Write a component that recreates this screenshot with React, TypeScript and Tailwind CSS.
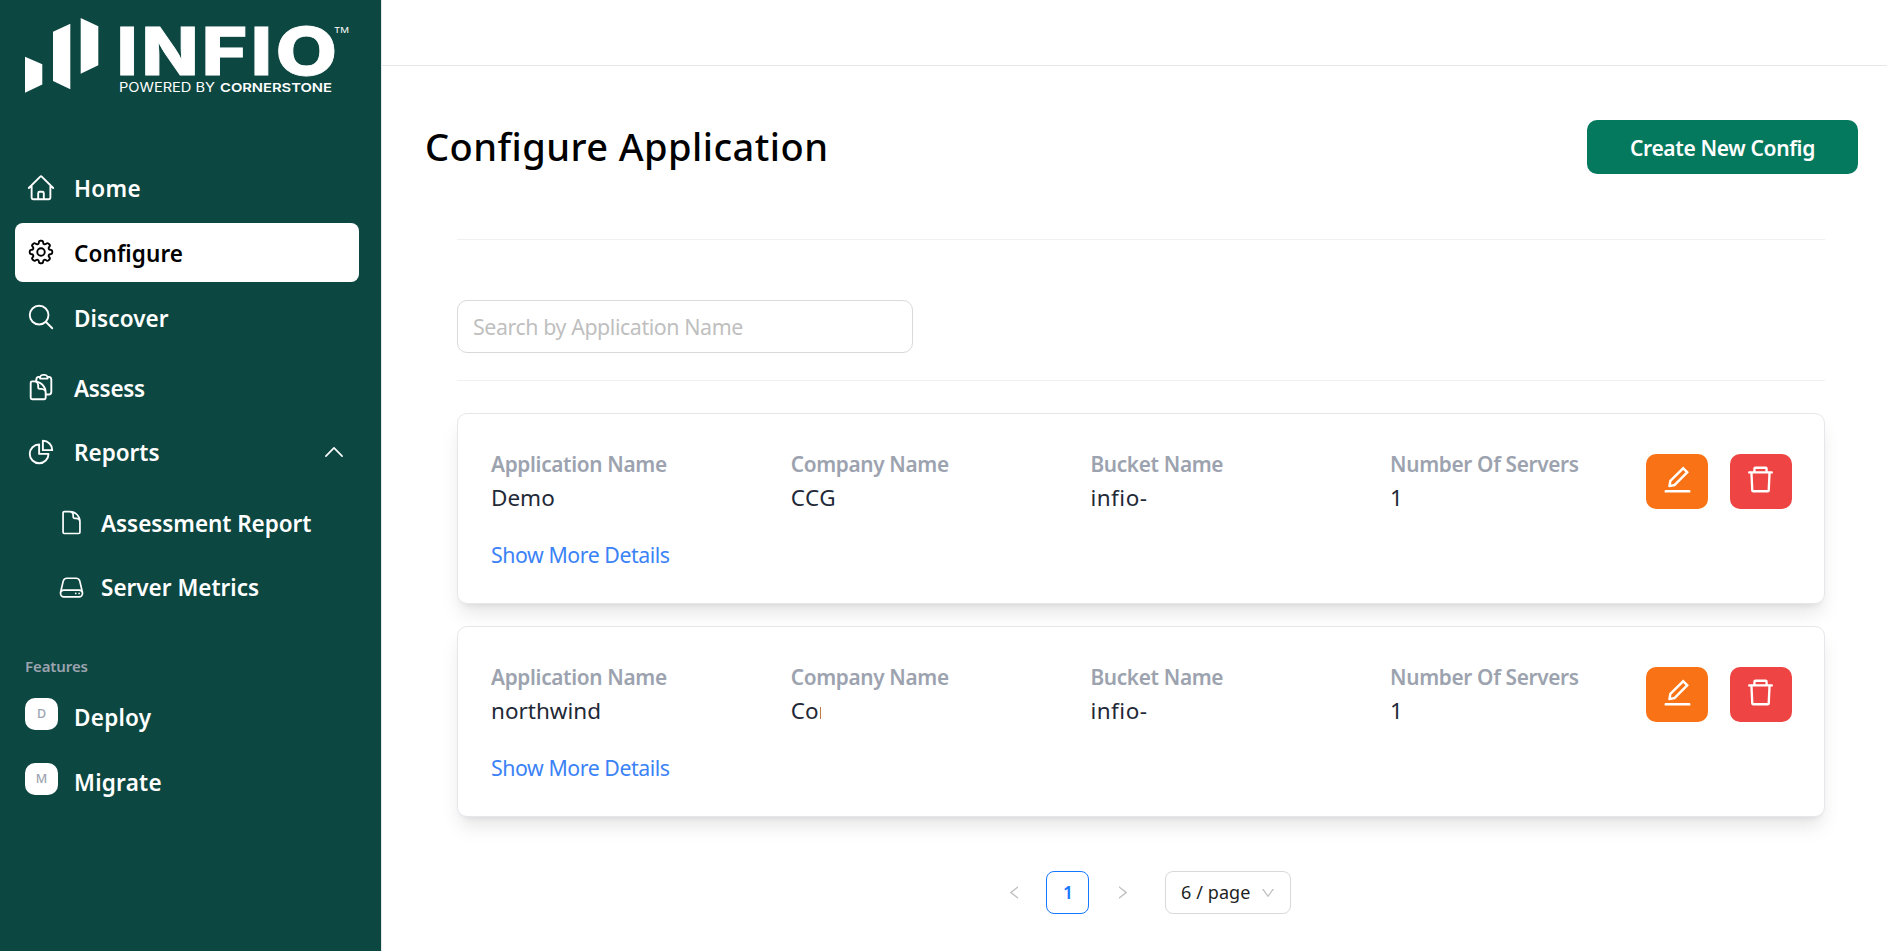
import React from "react";
import {
  HiOutlineHome, HiOutlineCog8Tooth, HiOutlineMagnifyingGlass, HiOutlineClipboardDocument,
  HiOutlineChartPie, HiOutlineDocument, HiOutlineServer, HiOutlineChevronUp,
} from "react-icons/hi2";
import { AiOutlineEdit, AiOutlineDelete, AiOutlineLeft, AiOutlineRight, AiOutlineDown } from "react-icons/ai";

function Logo() {
  return (
    <svg className="block h-[100px] w-[381px] fill-white" viewBox="0 0 381 100">
      <polygon points="25,56.7 42.3,64.3 42.3,84.5 25,92.7" />
      <polygon points="53,31.7 70.3,23.7 70.3,89.3 53,81" />
      <polygon points="80.7,18 98.3,26.3 98.3,65.3 80.7,73.7" />
      <g className="stroke-white stroke-[0.8px] font-['Inter',sans-serif] text-[66px] font-extrabold">
        <text transform="translate(116.4 74.7) scale(1.13 1)">I</text>
        <text transform="translate(141.4 74.7) scale(1.13 1)">N</text>
        <text transform="translate(201.4 74.7) scale(1.19 1)">F</text>
        <text transform="translate(250.7 74.7) scale(1.13 1)">I</text>
        <text transform="translate(275.6 74.7) scale(1.21 1)">O</text>
      </g>
      <g className="font-['Inter',sans-serif] text-[12.4px]">
        <text x="119" y="91.5" textLength="96" lengthAdjust="spacingAndGlyphs">POWERED BY</text>
        <text x="220" y="91.5" textLength="112" lengthAdjust="spacingAndGlyphs" className="font-semibold">CORNERSTONE</text>
        <text x="334" y="33" textLength="15" lengthAdjust="spacingAndGlyphs" className="text-[8px]">TM</text>
      </g>
    </svg>
  );
}

type RowProps = { icon: React.ReactNode; label: string; className?: string; labelClass?: string };

function NavRow({ icon, label, className = "", labelClass = "mt-[2px]" }: RowProps) {
  return (
    <a className={`flex h-[58px] items-center gap-[18px] rounded-lg pl-[11px] ${className}`}>
      {icon}
      <span className={labelClass}>{label}</span>
    </a>
  );
}

function SubRow({ icon, label, className = "", labelClass = "mt-[1px]" }: RowProps) {
  return (
    <a className={`flex h-[58px] items-center gap-[16px] pl-[43px] ${className}`}>
      {icon}
      <span className={labelClass}>{label}</span>
    </a>
  );
}

function FeatureRow({ letter, label, className = "" }: { letter: string; label: string; className?: string }) {
  return (
    <a className={`flex h-8 gap-[16px] pl-[10px] ${className}`}>
      <span className="flex h-8 w-[33px] items-center justify-center rounded-[10px] bg-white text-[12.5px] font-medium text-[#9ca3af]">{letter}</span>
      <span className="mt-[4px] leading-8 tracking-[0.25px]">{label}</span>
    </a>
  );
}

const ICON = "size-[30px] shrink-0";
const SUB_ICON = "size-[27px] shrink-0";

function Sidebar() {
  return (
    <aside className="w-[382px] shrink-0 border-r border-[#e5e7eb] bg-[#0d4741] text-white">
      <Logo />
      <nav className="flex flex-col pt-[59px] pl-[15px] pr-[22px] text-[22.5px] leading-[30px] font-semibold">
        <NavRow icon={<HiOutlineHome className={ICON} />} label="Home" labelClass="mt-[2px] tracking-[0.3px]" />
        <NavRow icon={<HiOutlineCog8Tooth className={ICON} />} label="Configure" className="mt-[6px] h-[59px] bg-white pb-px text-black" labelClass="mt-[3px] tracking-[0.1px]" />
        <NavRow icon={<HiOutlineMagnifyingGlass className={ICON} />} label="Discover" className="mt-[6px]" labelClass="mt-[4px] tracking-[0.1px]" />
        <NavRow icon={<HiOutlineClipboardDocument className={ICON} />} label="Assess" className="mt-[12px]" labelClass="mt-[4px] tracking-[-0.3px]" />
        <div className="mt-[7px] flex items-center justify-between pr-[12px]">
          <NavRow icon={<HiOutlineChartPie className={ICON} />} label="Reports" />
          <HiOutlineChevronUp className="size-[26px]" />
        </div>
        <SubRow icon={<HiOutlineDocument className={SUB_ICON} />} label="Assessment Report" className="mt-[12px]" labelClass="mt-[3px] tracking-[-0.05px]" />
        <SubRow icon={<HiOutlineServer className={SUB_ICON} />} label="Server Metrics" className="mt-[7px]" />
        <p className="mt-[40px] pl-[10px] text-[15px] leading-5 tracking-[-0.1px] text-[#9ca3af]">Features</p>
        <FeatureRow letter="D" label="Deploy" className="mt-[22px]" />
        <FeatureRow letter="M" label="Migrate" className="mt-[33px]" />
      </nav>
    </aside>
  );
}

type Config = { name: string; company: string; companyClass?: string; bucket: string; servers: string };

function Field({ label, value, valueClass = "" }: { label: string; value: string; valueClass?: string }) {
  return (
    <div className="w-[299.7px]">
      <p className="text-[20.8px] leading-[35px] font-semibold tracking-[-0.33px] text-[#9ca3af]">{label}</p>
      <p className={`-mt-[2px] text-[22.5px] leading-[35px] text-[#1f2937] ${valueClass}`}>{value}</p>
    </div>
  );
}

function ConfigCard({ config }: { config: Config }) {
  return (
    <article className="flex h-[191px] justify-between rounded-[10px] border border-[#e5e7eb] bg-white pt-[33px] pr-[32px] pl-[33px] shadow-[0_12.5px_18.75px_-3.75px_rgb(0_0_0/0.1),0_5px_7.5px_-5px_rgb(0_0_0/0.1)]">
      <div>
        <div className="flex">
          <Field label="Application Name" value={config.name} />
          <Field label="Company Name" value={config.company} valueClass={config.companyClass} />
          <Field label="Bucket Name" value={config.bucket} valueClass="tracking-[0.5px]" />
          <Field label="Number Of Servers" value={config.servers} />
        </div>
        <a className="mt-[22px] inline-block text-[21.3px] leading-[35px] tracking-[-0.44px] text-[#3b82f6]">Show More Details</a>
      </div>
      <div className="-ml-16 flex shrink-0 gap-[22px] pt-[7px] text-white">
        <button className="flex h-[55px] w-[62px] items-center justify-center rounded-[10px] bg-[#f97316] pb-[4px]"><AiOutlineEdit className="size-[33px]" /></button>
        <button className="flex h-[55px] w-[62px] items-center justify-center rounded-[10px] bg-[#ef4444] pr-px pb-[4px]"><AiOutlineDelete className="size-[33px]" /></button>
      </div>
    </article>
  );
}

const CONFIGS: Config[] = [
  { name: "Demo", company: "CCG", companyClass: "tracking-[0.5px]", bucket: "infio-", servers: "1" },
  { name: "northwind", company: "Cor", companyClass: "w-[30.5px] overflow-hidden", bucket: "infio-", servers: "1" },
];

function Pagination() {
  return (
    <div className="mt-[54px] ml-[549px] flex h-[43px] items-center text-[17.5px]">
      <AiOutlineLeft className="size-[17px] text-[#bfbfbf]" />
      <span className="ml-[23px] flex h-[43px] w-[43px] items-center justify-center rounded-[8px] border border-[#1677ff] pl-px font-semibold text-[#1677ff]">1</span>
      <AiOutlineRight className="ml-[25px] size-[17px] text-[#bfbfbf]" />
      <div className="ml-[34px] flex h-[43px] w-[126px] items-center justify-between rounded-[8px] border border-[#d9d9d9] pr-[14px] pl-[15px] text-[#1f1f1f]">
        <span className="whitespace-nowrap text-[18px] tracking-[0.1px]">6 / page</span>
        <AiOutlineDown className="size-[16px] text-[#bfbfbf]" />
      </div>
    </div>
  );
}

export default function App() {
  return (
    <div className="flex h-[951px] overflow-hidden bg-white font-['Noto_Sans',sans-serif]">
      <Sidebar />
      <div className="min-w-0 flex-1">
        <header className="h-[66px] border-b border-[#e5e7eb]" />
        <main className="pt-[54px] pr-[29px] pl-[43px]">
          <div className="flex h-[54px] items-center justify-between">
            <h1 className="-mt-[2px] text-[38px] font-medium tracking-[0.44px] text-black">Configure Application</h1>
            <button className="h-[54px] w-[271px] rounded-[10px] bg-[#05795e] pt-[3px] text-[21px] font-semibold tracking-[-0.35px] text-white">Create New Config</button>
          </div>
          <section className="mt-[65px] mr-[33px] ml-[32px]">
            <hr className="border-[#f0f0f0]" />
            <input className="mt-[60px] block h-[53px] w-[456px] rounded-[10px] border border-[#d9d9d9] px-[15px] text-[21.4px] tracking-[-0.43px] placeholder:text-[#bfbfbf]" placeholder="Search by Application Name" />
            <hr className="mt-[27px] border-[#f0f0f0]" />
            <div className="mt-[32px] flex flex-col gap-[22px]">
              {CONFIGS.map((config) => <ConfigCard key={config.name} config={config} />)}
            </div>
            <Pagination />
          </section>
        </main>
      </div>
    </div>
  );
}
